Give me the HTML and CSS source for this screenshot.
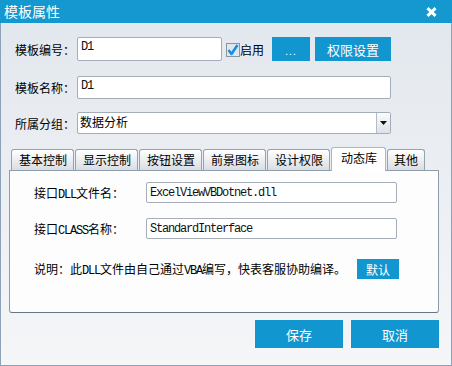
FILE: index.html
```html
<!DOCTYPE html>
<html>
<head>
<meta charset="utf-8">
<link rel="stylesheet" href="styles.css">
</head>
<body>
<div class="window">
  <div class="titlebar">
    <span class="title">模板属性</span>
    <svg class="close" width="11" height="10" viewBox="0 0 11 10"><path d="M1.5 1.2 L9.5 8.8 M9.5 1.2 L1.5 8.8" stroke="#fff" stroke-width="3" fill="none"/></svg>
  </div>
  <div class="main">
    <div class="form">
      <div class="row row1">
        <span class="lbl">模板编号：</span>
        <div class="input input-code">D1</div>
        <span class="check">
          <svg width="14" height="14" viewBox="0 0 14 14"><rect x="0.5" y="0.5" width="13" height="13" fill="#dfe6ee" stroke="#8d959e"/><path d="M2.5 7 L5.5 11 L11.5 2" stroke="#1a8fe0" stroke-width="2.6" fill="none" stroke-linejoin="round"/></svg>
          <span class="check-text">启用</span>
        </span>
        <button class="btn btn-dots">...</button>
        <button class="btn btn-perm">权限设置</button>
      </div>
      <div class="row row2">
        <span class="lbl">模板名称：</span>
        <div class="input input-wide">D1</div>
      </div>
      <div class="row row3">
        <span class="lbl">所属分组：</span>
        <div class="select">
          <span class="select-text">数据分析</span>
          <span class="select-arrow"><svg width="7" height="4" viewBox="0 0 7 4"><path d="M0 0 H7 L3.5 4 Z" fill="#111"/></svg></span>
        </div>
      </div>
    </div>
    <div class="tabs">
      <span class="tab">基本控制</span>
      <span class="tab">显示控制</span>
      <span class="tab">按钮设置</span>
      <span class="tab">前景图标</span>
      <span class="tab">设计权限</span>
      <span class="tab tab-active">动态库</span>
      <span class="tab tab-last">其他</span>
    </div>
    <div class="panel">
      <div class="prow">
        <span class="plbl">接口<span class="lat">DLL</span>文件名：</span>
        <div class="input pinput">ExcelViewVBDotnet.dll</div>
      </div>
      <div class="prow prow2">
        <span class="plbl">接口<span class="lat">CLASS</span>名称：</span>
        <div class="input pinput">StandardInterface</div>
      </div>
      <div class="note">
        <span class="note-text">说明：此<span class="lat">DLL</span>文件由自己通过<span class="lat">VBA</span>编写，快表客服协助编译。</span>
        <button class="btn btn-default">默认</button>
      </div>
    </div>
    <div class="footer">
      <button class="btn btn-foot">保存</button>
      <button class="btn btn-foot">取消</button>
    </div>
  </div>
</div>
</body>
</html>
```

FILE: styles.css
```css
* { box-sizing: border-box; }
html, body { margin: 0; padding: 0; }
body {
  width: 452px;
  height: 366px;
  font-family: "Noto Sans CJK SC", "Liberation Sans", sans-serif;
  font-size: 12px;
  color: #000;
  background: #fff;
}
.window {
  width: 452px;
  height: 366px;
  display: flex;
  flex-direction: column;
}
.titlebar {
  height: 23px;
  background: #1597d0;
  display: flex;
  align-items: center;
  justify-content: space-between;
  padding: 0 15px 0 4px;
}
.title {
  color: #fff;
  font-size: 14px;
  line-height: 23px;
}
.close { display: block; margin-top: 1px; }
.main {
  flex: 1;
  border: 1px solid #8da2b8;
  border-top: none;
  background: linear-gradient(#e3e8ee, #f5f6f8);
  display: flex;
  flex-direction: column;
}
.form { padding: 14px 0 0 14px; }
.row { display: flex; align-items: center; }
.row1 { height: 24px; }
.row2 { height: 23px; margin-top: 15px; }
.row3 { height: 22px; margin-top: 13px; }
.lbl { width: 62px; flex: none; line-height: 16px; padding-top: 1px; }
.input {
  height: 100%;
  background: #fff;
  border: 1px solid #a4adb8;
  border-radius: 2px;
  font-family: "Liberation Mono", monospace;
  font-size: 12px;
  letter-spacing: -1.2px;
  color: #111;
  padding: 2px 0 0 3px;
  line-height: 14px;
}
.input-code { width: 145px; }
.input-wide { width: 314px; }
.check {
  display: flex;
  align-items: center;
  margin-left: 4px;
  height: 24px;
}
.check svg { display: block; margin-top: 2px; }
.check-text { width: 24px; font-size: 12px; line-height: 14px; margin-top: 2px; }
.btn {
  border: none;
  background: #1296cf;
  color: #fff;
  font-family: "Noto Sans CJK SC", sans-serif;
  font-size: 12px;
  padding: 0;
  margin: 0;
  display: flex;
  align-items: center;
  justify-content: center;
}
.btn-dots { width: 38px; height: 24px; margin-left: 8px; letter-spacing: 1px; font-size: 10px; padding-top: 2px; }
.btn-perm { width: 76px; height: 24px; margin-left: 5px; font-size: 13px; }
.select {
  width: 314px;
  height: 100%;
  background: #fff;
  border: 1px solid #a4adb8;
  border-radius: 2px;
  display: flex;
}
.select-text { flex: 1; padding-left: 2px; line-height: 18px; font-size: 12px; }
.select-arrow {
  width: 14px;
  border-left: 1px solid #b3bcc6;
  background: linear-gradient(#fafbfc, #dde2e8);
  display: flex;
  align-items: center;
  justify-content: center;
}
.tabs {
  display: flex;
  align-items: flex-end;
  gap: 1px;
  margin: 13px 0 0 10px;
  height: 23px;
  position: relative;
  z-index: 1;
}
.tab {
  height: 21px;
  padding: 0 6px 0 7px;
  border: 1px solid #98a2ad;
  border-bottom: none;
  border-radius: 3px 3px 0 0;
  background: linear-gradient(#ffffff, #d9dde2);
  font-size: 12px;
  line-height: 20px;
}
.tab-active {
  height: 24px;
  margin-bottom: -1px;
  padding: 0 8px 0 9px;
  background: #fff;
  border-color: #86c4dc;
  line-height: 19px;
}
.tab-last { padding: 0 6px; }
.panel {
  margin-left: 8px;
  width: 430px;
  height: 143px;
  background: #fdfdfe;
  border: 1px solid #8e9dab;
  border-bottom-color: #617687;
  border-radius: 0 0 3px 3px;
  padding: 11px 0 0 24px;
}
.prow { display: flex; align-items: center; height: 21px; }
.prow2 { margin-top: 15px; }
.plbl { width: 112px; flex: none; }
.pinput { width: 251px; padding-top: 3px; }
.lat { font-family: "Liberation Mono", monospace; font-size: 12px; letter-spacing: -1.2px; }
.note { display: flex; align-items: center; height: 20px; margin-top: 20px; }
.btn-default { width: 42px; height: 20px; margin-left: 11px; }
.footer {
  display: flex;
  justify-content: flex-end;
  gap: 8px;
  margin-top: 7px;
  padding-right: 12px;
}
.btn-foot { width: 88px; height: 28px; font-size: 13px; }
```
